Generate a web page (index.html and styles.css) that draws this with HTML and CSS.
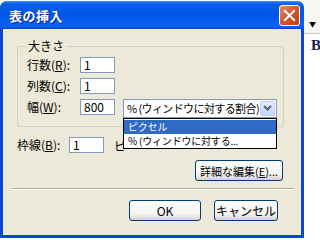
FILE: index.html
```html
<!DOCTYPE html>
<html lang="ja">

<head>
    <meta charset="UTF-8">
    <title>表の挿入</title>
    <link rel="stylesheet" href="styles.css">
</head>

<body>
    <div class="desk">
        <!-- Dialog window -->
        <div class="dialog">
            <div class="titlebar">
                <span class="title">表の挿入</span>
                <span class="close-btn">
                    <svg width="13" height="13" viewBox="0 0 13 13">
                        <path d="M2 2 L11 11 M11 2 L2 11" stroke="#fff" stroke-width="2" stroke-linecap="square" />
                    </svg>
                </span>
            </div>

            <div class="dialog-body">
                <!-- Size group -->
                <div class="group">
                    <span class="legend">大きさ</span>
                    <div class="row">
                        <span class="label">行数(<u>R</u>):</span>
                        <span class="field">1</span>
                    </div>
                    <div class="row">
                        <span class="label">列数(<u>C</u>):</span>
                        <span class="field">1</span>
                    </div>
                    <div class="row">
                        <span class="label">幅(<u>W</u>):</span>
                        <span class="field">800</span>
                        <div class="combo">
                            <span class="combo-text">% (ウィンドウに対する割合)</span>
                            <span class="combo-btn">
                                <svg width="9" height="6" viewBox="0 0 9 6">
                                    <path d="M1 1 L4.5 4.5 L8 1" fill="none" stroke="#4d6185" stroke-width="2" />
                                </svg>
                            </span>
                            <!-- open list -->
                            <div class="combo-list">
                                <div class="item selected">ピクセル</div>
                                <div class="item">% (ウィンドウに対する...</div>
                            </div>
                        </div>
                    </div>
                </div>

                <div class="row border-row">
                    <span class="label">枠線(<u>B</u>):</span>
                    <span class="field">1</span>
                    <span class="unit">ピ</span>
                </div>

                <div class="adv-row">
                    <span class="btn adv-btn">詳細な編集(<u>E</u>)...</span>
                </div>

                <div class="separator"></div>

                <div class="actions">
                    <span class="btn ok-btn">OK</span>
                    <span class="btn cancel-btn">キャンセル</span>
                </div>
            </div>
        </div>

        <!-- Editor behind the dialog -->
        <div class="side">
            <div class="side-top">&#9660;</div>
            <div class="side-b">B</div>
        </div>
    </div>
</body>

</html>
```

FILE: styles.css
```css
body {
    margin: 0;
    background-color: #ffffff;
    font-family: "Noto Sans CJK JP", "Noto Sans", sans-serif;
    font-size: 12px;
    color: #000;
}

.desk {
    display: flex;
    width: 320px;
    height: 240px;
    overflow: hidden;
}

/* Window frame */
.dialog {
    width: 304px;
    height: 237px;
    margin-top: 1px;
    box-sizing: border-box;
    background: #ece9d8;
    border: 3px solid #0846d6;
    border-top: none;
    border-radius: 7px 7px 0 0;
    display: flex;
    flex-direction: column;
    flex-shrink: 0;
}

.titlebar {
    height: 28px;
    margin: 0 -3px;
    border-radius: 7px 7px 0 0;
    background: linear-gradient(#3d8cf5 0%, #0a5fe8 10%, #0055e5 45%, #0863f0 85%, #0a5ae0 95%, #0040c8 100%);
    display: flex;
    align-items: center;
    justify-content: space-between;
    padding: 0 4px 0 9px;
}

.title {
    color: #fff;
    font-weight: bold;
    font-size: 13px;
    text-shadow: 1px 1px 0 #0a1e8c;
    letter-spacing: 0.5px;
}

.close-btn {
    width: 19px;
    height: 19px;
    border: 1px solid #fff;
    border-radius: 3px;
    background: linear-gradient(135deg, #e68b6c, #d3532e 50%, #c1400f);
    display: flex;
    align-items: center;
    justify-content: center;
}

.dialog-body {
    flex: 1;
    position: relative;
    padding: 17px 0 0 9px;
}

/* Group box */
.group {
    position: relative;
    width: 267px;
    height: 81px;
    box-sizing: border-box;
    border: 1px solid #d0d0bf;
    border-radius: 3px;
    margin-left: 5px;
    padding: 10px 0 0 9px;
}

.legend {
    position: absolute;
    top: -9px;
    left: 7px;
    padding: 0 3px;
    background: #ece9d8;
    line-height: 16px;
}

.row {
    display: flex;
    align-items: center;
    height: 16px;
    margin-bottom: 5px;
}

.label {
    width: 53px;
    line-height: 16px;
}

.field {
    width: 35px;
    height: 16px;
    box-sizing: border-box;
    background: #fff;
    border: 1px solid #7f9db9;
    padding-left: 3px;
    line-height: 14px;
}

/* Combo box */
.combo {
    position: relative;
    margin-left: 8px;
    width: 154px;
    height: 19px;
    box-sizing: border-box;
    border: 1px solid #7f9db9;
    background: #fff;
    display: flex;
    align-items: center;
    justify-content: space-between;
    margin-top: 2px;
}

.combo-text {
    padding-left: 3px;
    font-size: 11px;
    letter-spacing: -0.6px;
    white-space: nowrap;
}

.combo-btn {
    width: 15px;
    height: 15px;
    margin-right: 1px;
    flex-shrink: 0;
    box-sizing: border-box;
    border: 1px solid #b9cdf7;
    border-radius: 2px;
    background: linear-gradient(#e6eefc, #c5d5f8);
    display: flex;
    align-items: center;
    justify-content: center;
}

.combo-list {
    position: absolute;
    top: 18px;
    left: -1px;
    width: 154px;
    box-sizing: border-box;
    border: 1px solid #000;
    background: #fff;
    padding: 1px 0 0;
    z-index: 10;
}

.item {
    height: 14px;
    padding-left: 4px;
    font-size: 10px;
    line-height: 14px;
    letter-spacing: -0.2px;
    overflow: hidden;
}

.item.selected {
    background: #316ac5;
    color: #fff;
}

.border-row {
    margin-top: 10px;
    margin-left: 5px;
}

.border-row .label {
    width: 52px;
}

.unit {
    margin-left: 10px;
}

/* Buttons */
.btn {
    display: flex;
    align-items: center;
    justify-content: center;
    height: 21px;
    box-sizing: border-box;
    border: 1px solid #003c74;
    border-radius: 3px;
    background: linear-gradient(#ffffff, #f3f3ef 70%, #d6d0c5);
}

.adv-row {
    display: flex;
    justify-content: flex-end;
    margin-top: 7px;
    padding-right: 18px;
}

.adv-btn {
    width: 88px;
    font-size: 11px;
}

.separator {
    margin: 7px 8px 0 0;
    height: 0;
    border-top: 1px solid #aca899;
    border-bottom: 1px solid #fff;
}

.actions {
    display: flex;
    justify-content: flex-end;
    gap: 13px;
    margin-top: 10px;
    padding-right: 23px;
}

.ok-btn {
    width: 72px;
}

.cancel-btn {
    width: 64px;
}

/* Background editor strip */
.side {
    flex: 1;
    display: flex;
    flex-direction: column;
}

.side-top {
    height: 34px;
    border-bottom: 1px solid #c9c7ba;
    background: #f6f6f3;
    font-size: 7px;
    padding: 19px 0 0 5px;
    box-sizing: border-box;
}

.side-b {
    padding: 3px 0 0 7px;
    font-family: "Liberation Serif", serif;
    font-weight: bold;
    font-size: 15px;
    color: #1b1b4d;
}
```
